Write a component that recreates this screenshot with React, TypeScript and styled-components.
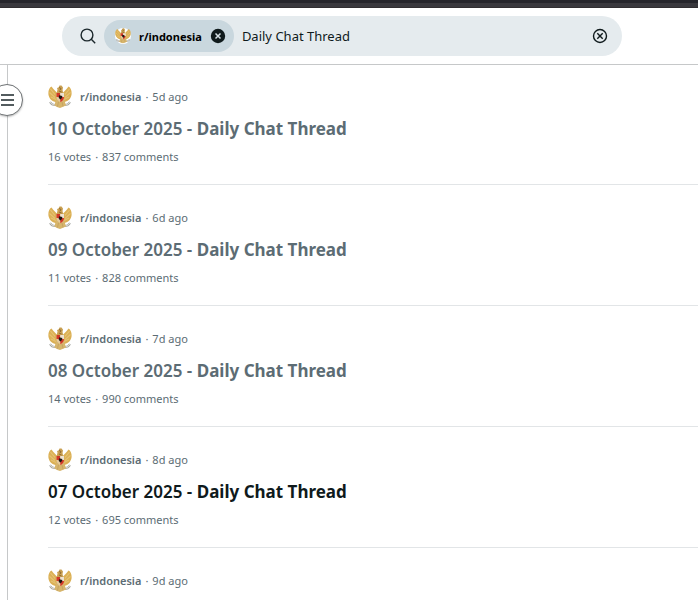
import React from "react";
import styled, { createGlobalStyle } from "styled-components";

const fontStack = `"Noto Sans", "Open Sans", sans-serif`;

const GlobalStyle = createGlobalStyle`
  * { box-sizing: border-box; }
  body {
    margin: 0;
    background: #fff;
    color: #0f1a1c;
    font-family: ${fontStack};
    overflow: hidden;
  }
  button { padding: 0; border: 0; background: none; color: inherit; cursor: pointer; }
  a { color: inherit; text-decoration: none; }
`;

const Page = styled.div`
  display: flex;
  flex-direction: column;
  min-height: 100vh;
`;

const BrowserStrip = styled.div`
  height: 8px;
  background: #39383d;
  border-top: 3px solid #25252b;
  border-bottom: 1px solid #302e31;
`;

const Header = styled.header`
  display: flex;
  height: 57px;
  padding: 8px 76px 8px 62px;
  border-bottom: 1px solid #c6c8c9;
`;

const SearchBar = styled.form`
  display: flex;
  align-items: center;
  flex: 1;
  height: 40px;
  padding: 0 14px 0 18px;
  border-radius: 20px;
  background: #e5ebee;
`;

const Chip = styled.span`
  display: flex;
  align-items: center;
  gap: 8px;
  height: 32px;
  margin-left: 8px;
  padding: 0 8px 0 11px;
  border-radius: 16px;
  background: #c9d7de;
  font-size: 11px;
  font-weight: 700;
  color: #000;
`;

const ChipLabel = styled.span`
  min-width: 62px;
  white-space: nowrap;
`;

const IconButton = styled.button`
  display: flex;
  flex: none;
`;

const SearchInput = styled.input`
  flex: 1;
  min-width: 0;
  padding: 0 8px;
  border: 0;
  outline: 0;
  background: transparent;
  color: #0f1a1c;
  font: 400 13px ${fontStack};
`;

const Body = styled.div`
  display: flex;
  flex: 1;
`;

const Rail = styled.aside`
  position: relative;
  flex: none;
  width: 8px;
  border-right: 1px solid #c6c8c9;
`;

const MenuButton = styled.button`
  position: absolute;
  top: 19px;
  left: -9px;
  display: grid;
  place-items: center;
  width: 32px;
  height: 32px;
  border: 1px solid #6f7375;
  border-radius: 50%;
  background: #fff;
  box-shadow: 0 1px 2px #0004;
`;

const Results = styled.main`
  display: flex;
  flex-direction: column;
  gap: 1px;
  flex: 1;
  padding-left: 40px;
`;

const Post = styled.article`
  display: flex;
  flex-direction: column;
  flex: none;
  gap: 8px;
  padding: 20px 0 19px;
  border-bottom: 1px solid #e2e5e7;
  color: #5c6c74;
  font-size: 11px;
  line-height: 16px;
  &:last-child {
    padding-bottom: 0;
    border-bottom: 0;
  }
`;

const Meta = styled.div`
  display: flex;
  align-items: center;
  gap: 4px;
  height: 24px;
`;

const Community = styled.a`
  display: flex;
  align-items: center;
  gap: 8px;
  font-weight: 600;
`;

const Title = styled.h2<{ $unread?: boolean }>`
  margin: 0;
  font-size: 17px;
  line-height: 24px;
  font-weight: 600;
  color: ${(p) => (p.$unread ? "#0f1a1c" : "#5c6c74")};
  b { font-weight: 700; }
`;

const Stats = styled.div`
  display: flex;
  gap: 4px;
`;

const Garuda = ({ size }: { size: number }) => (
  <svg width={size} height={size} viewBox="0 0 24 24" aria-hidden="true">
    <circle cx="12" cy="12" r="12" fill="#fff" />
    <path d="M10 9C9 7 5.500 5 3.500 1.500C.5 3 -.2 8 .8 11C2 14.500 4.500 17 9 17L12 13Z" fill="#dbb055" />
    <path d="M14 9C15 7 18.500 5 20.500 1.500C23.500 3 24.200 8 23.200 11C22 14.500 19.500 17 15 17L12 13Z" fill="#dbb055" />
    <path d="M2.500 4L7 9.500M1.500 7.500L7 12.500M3 12L8 14.500M21.500 4L17 9.500M22.500 7.500L17 12.500M21 12L16 14.500" stroke="#e6c374" strokeWidth="1.100" />
    <path d="M2 17Q4 20.500 8 20Q12 21 16 20Q20 20.500 22 17" fill="none" stroke="#a5a6a1" strokeWidth="2" />
    <path d="M2 17Q4 20.500 8 20Q12 21 16 20Q20 20.500 22 17" fill="none" stroke="#e0ded5" strokeWidth=".9" />
    <path d="M8 14L6.500 20.500L9 22L12 23L14.500 22L18 20.500L16 14Z" fill="#d7b56b" />
    <path d="M10.500 17L9.500 21.500M14 17L15 21" stroke="#b8975c" strokeWidth=".6" />
    <path d="M8.500 9L9.500 4.500L9 3L10.500 2.500L11.500 .5L13.500 .5L15 2.500L14.500 5L15.500 9Z" fill="#c9a052" />
    <path d="M11 2.500L13 3.500L12 5M11 6L13.500 7" fill="none" stroke="#7d5b2b" strokeWidth=".8" />
    <path d="M8.500 8H16V13Q15.500 16 12.300 17.200Q9 15.500 8.500 13Z" fill="#e4c99e" />
    <path d="M8.500 8H12.300V12H8.500ZM12.300 12H16Q16 15.500 12.300 17.200Z" fill="#d23927" />
    <path d="M12.300 8H16V12H12.300Z" fill="#ede2d1" />
    <path d="M11 10.300L14.300 11L14 13L12.300 14.500L10.700 12.700Z" fill="#1f1814" />
  </svg>
);

const SearchIcon = () => (
  <svg width="16" height="16" viewBox="0 0 16 16" fill="none" stroke="#1b272b" strokeWidth="1.400" aria-hidden="true">
    <circle cx="7" cy="7" r="5.900" />
    <path d="M11.300 11.300L15.200 15.200" />
  </svg>
);

const RemoveIcon = () => (
  <svg width="16" height="16" viewBox="0 0 16 16" aria-hidden="true">
    <circle cx="8" cy="8" r="7.200" fill="#0f1a1c" />
    <path d="M5.500 5.500L10.500 10.500M10.500 5.500L5.500 10.500" stroke="#d5e0e5" strokeWidth="1.500" />
  </svg>
);

const ClearIcon = () => (
  <svg width="16" height="16" viewBox="0 0 16 16" fill="none" stroke="#0f1a1c" strokeWidth="1.400" aria-hidden="true">
    <circle cx="8" cy="8" r="6.500" />
    <path d="M5.300 5.300L10.700 10.700M10.700 5.300L5.300 10.700" />
  </svg>
);

const MenuIcon = () => (
  <svg width="14" height="12" viewBox="0 0 14 12" stroke="#1b272b" strokeWidth="1.300" aria-hidden="true">
    <path d="M1 1H14M1 6H14M1 11H14" />
  </svg>
);

type PostData = {
  age: string;
  date?: string;
  votes?: number;
  comments?: number;
  unread?: boolean;
};

const posts: PostData[] = [
  { date: "10 October 2025", age: "5d ago", votes: 16, comments: 837 },
  { date: "09 October 2025", age: "6d ago", votes: 11, comments: 828 },
  { date: "08 October 2025", age: "7d ago", votes: 14, comments: 990 },
  { date: "07 October 2025", age: "8d ago", votes: 12, comments: 695, unread: true },
  { age: "9d ago" },
];

export default function App() {
  return (
    <Page>
      <GlobalStyle />
      <BrowserStrip />
      <Header>
        <SearchBar role="search" onSubmit={(e) => e.preventDefault()}>
          <SearchIcon />
          <Chip>
            <Garuda size={16} />
            <ChipLabel>r/indonesia</ChipLabel>
            <IconButton type="button" aria-label="Remove r/indonesia filter">
              <RemoveIcon />
            </IconButton>
          </Chip>
          <SearchInput aria-label="Search" defaultValue="Daily Chat Thread" />
          <IconButton type="button" aria-label="Clear search">
            <ClearIcon />
          </IconButton>
        </SearchBar>
      </Header>
      <Body>
        <Rail>
          <MenuButton type="button" aria-label="Open navigation">
            <MenuIcon />
          </MenuButton>
        </Rail>
        <Results>
          {posts.map((post) => (
            <Post key={post.age}>
              <Meta>
                <Community href="#">
                  <Garuda size={24} />
                  r/indonesia
                </Community>
                <span>·</span>
                <time>{post.age}</time>
              </Meta>
              {post.date && (
                <>
                  <Title $unread={post.unread}>
                    <a href="#">
                      {post.date} - <b>Daily Chat Thread</b>
                    </a>
                  </Title>
                  <Stats>
                    <span>{post.votes} votes</span>
                    <span>·</span>
                    <span>{post.comments} comments</span>
                  </Stats>
                </>
              )}
            </Post>
          ))}
        </Results>
      </Body>
    </Page>
  );
}
